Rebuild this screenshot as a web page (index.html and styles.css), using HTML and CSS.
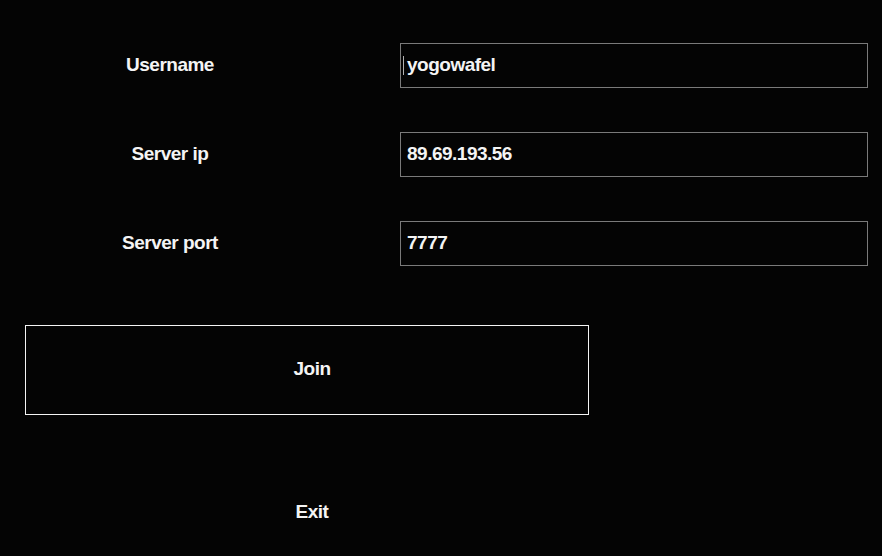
FILE: index.html
```html
<!DOCTYPE html>
<html>
<head>
<meta charset="utf-8">
<link rel="stylesheet" href="styles.css">
</head>
<body>
<div class="menu">
  <div class="fields">
    <div class="row">
      <div class="label">Username</div>
      <div class="field"><span class="caret"></span>yogowafel</div>
    </div>
    <div class="row">
      <div class="label">Server ip</div>
      <div class="field">89.69.193.56</div>
    </div>
    <div class="row">
      <div class="label">Server port</div>
      <div class="field">7777</div>
    </div>
  </div>
  <div class="button join">Join</div>
  <div class="button exit">Exit</div>
</div>
</body>
</html>
```
FILE: styles.css
```css
html, body {
  margin: 0;
  padding: 0;
  background: #040404;
}
body {
  width: 882px;
  height: 556px;
  overflow: hidden;
  font-family: "Liberation Sans", Arial, sans-serif;
  font-weight: bold;
  font-size: 19px;
  letter-spacing: -0.5px;
  color: #f4f4f4;
}
.menu {
  display: flex;
  flex-direction: column;
  padding-top: 43px;
}
.fields {
  display: flex;
  flex-direction: column;
  gap: 44px;
}
.row {
  display: flex;
  align-items: center;
  height: 45px;
}
.label {
  width: 340px;
  text-align: center;
  margin-top: -2px;
}
.field {
  position: relative;
  margin-left: 60px;
  width: 468px;
  height: 45px;
  box-sizing: border-box;
  border: 1px solid #7a7a7a;
  display: flex;
  align-items: center;
  padding-left: 6px;
  padding-bottom: 2px;
}
.caret {
  position: absolute;
  left: 2px;
  top: 12px;
  width: 1px;
  height: 19px;
  background: #b0b0b0;
}
.button {
  box-sizing: border-box;
  width: 564px;
  height: 90px;
  margin-left: 25px;
  display: flex;
  align-items: center;
  justify-content: center;
  padding-left: 10px;
  padding-bottom: 2px;
}
.join {
  margin-top: 59px;
  border: 1px solid #f4f4f4;
}
.exit {
  margin-top: 53px;
}
```
